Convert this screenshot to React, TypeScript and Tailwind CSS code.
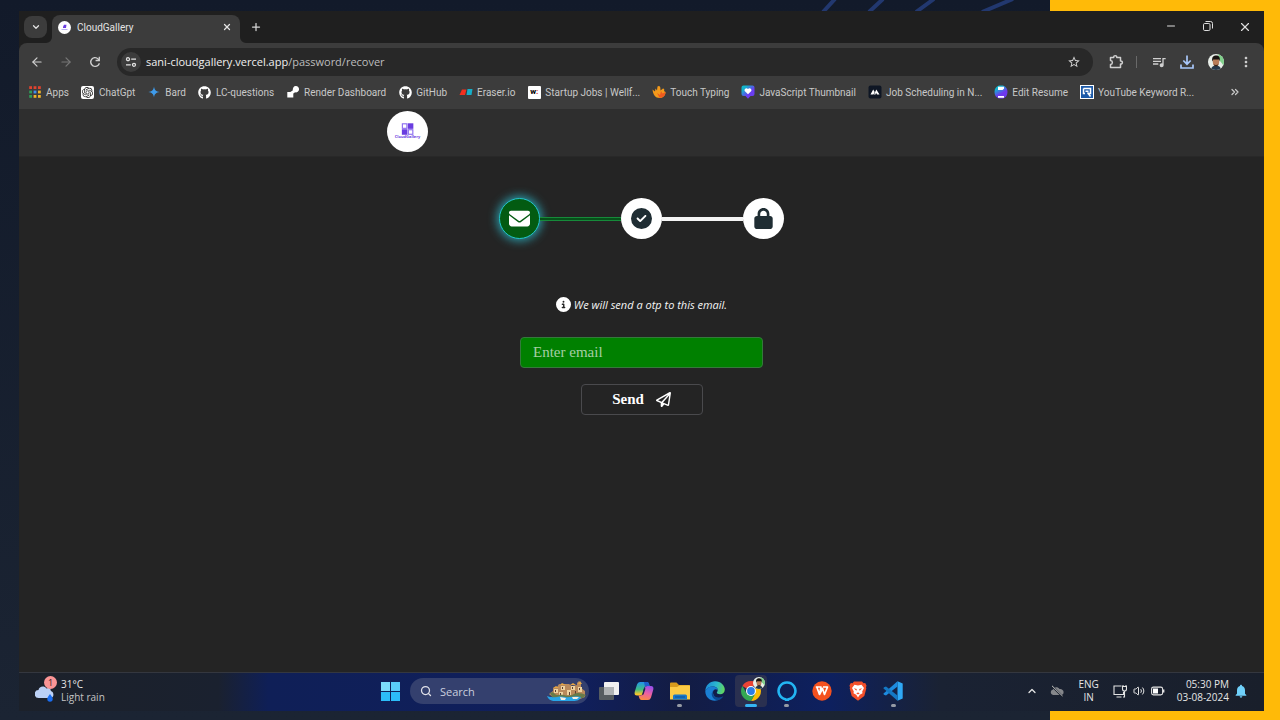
import type { ReactNode } from "react";
import {
  FaCircleCheck,
  FaCircleInfo,
  FaEnvelope,
  FaGithub,
  FaLock,
  FaRegPaperPlane,
} from "react-icons/fa6";
import { SiOpenai } from "react-icons/si";
import {
  MdMoreVert,
  MdNotifications,
  MdOutlineQueueMusic,
  MdStarBorder,
} from "react-icons/md";
import {
  ArrowLeft,
  ArrowRight,
  ChevronDown,
  ChevronsRight,
  ChevronUp,
  Minus,
  Plus,
  Search,
  Volume2,
  X,
} from "lucide-react";

function GalleryMark({ className }: { className: string }) {
  return (
    <svg viewBox="0 0 40 40" className={className} aria-hidden="true">
      <circle cx="20" cy="20" r="20" fill="#fff" />
      <rect x="15" y="12.5" width="4.4" height="4.4" fill="none" stroke="#8b6cf0" strokeWidth="1.1" />
      <rect x="20.3" y="12" width="5.4" height="5.4" fill="#6a3de0" />
      <rect x="14.5" y="17.8" width="5.4" height="5.4" fill="#6a3de0" />
      <rect x="20.8" y="18.3" width="4.4" height="4.4" fill="none" stroke="#8b6cf0" strokeWidth="1.1" />
    </svg>
  );
}

function AppsIcon() {
  const colors = ["#e0432f", "#e0432f", "#e0432f", "#2f9e58", "#3f8ef0", "#f0b429", "#2f9e58", "#f0b429", "#f0b429"];
  return (
    <svg viewBox="0 0 12 12" className="size-3">
      {colors.map((c, i) => (
        <rect key={i} x={(i % 3) * 4.4 + 0.2} y={Math.floor(i / 3) * 4.4 + 0.2} width="2.8" height="2.8" fill={c} />
      ))}
    </svg>
  );
}

const bookmarks: { label: string; icon: ReactNode }[] = [
  { label: "Apps", icon: <AppsIcon /> },
  {
    label: "ChatGpt",
    icon: (
      <span className="flex size-[13px] items-center justify-center rounded-xs bg-white">
        <SiOpenai className="size-[11px] text-[#222]" />
      </span>
    ),
  },
  {
    label: "Bard",
    icon: (
      <svg viewBox="0 0 14 14" className="size-3.5">
        <path d="M7 1.5C7.5 5 9 6.5 12.7 7 9 7.5 7.5 9 7 12.500 6.500 9 5 7.500 1.300 7 5 6.500 6.500 5 7 1.500Z" fill="#3f9bea" />
        <circle cx="7" cy="7" r="1.700" fill="#3f9bea" />
      </svg>
    ),
  },
  { label: "LC-questions", icon: <FaGithub className="size-[13px] text-white" /> },
  {
    label: "Render Dashboard",
    icon: (
      <svg viewBox="0 0 14 14" className="size-3.5">
        <path d="M9.700 1a3.200 3.200 0 1 1-.6 6.300L7.300 8.500V12.500H1.300V7h3l2.400-1.600C6.700 3 7.800 1 9.700 1Z" fill="#fff" />
      </svg>
    ),
  },
  { label: "GitHub", icon: <FaGithub className="size-[13px] text-white" /> },
  {
    label: "Eraser.io",
    icon: (
      <svg viewBox="0 0 14 14" className="size-3.5">
        <path d="M3 4.500h4.500L6 10H.5Z" fill="#f2301f" />
        <path d="M8.500 4h5l-1 6h-5Z" fill="#16aec8" />
      </svg>
    ),
  },
  {
    label: "Startup Jobs | Wellf...",
    icon: (
      <span className="flex size-[13px] items-center justify-center rounded-[1px] bg-white text-[8px] leading-none font-extrabold text-black">
        w<span className="text-[#d33]">:</span>
      </span>
    ),
  },
  {
    label: "Touch Typing",
    icon: (
      <svg viewBox="0 0 14 14" className="size-3.5">
        <path d="M.5 4.500 3 6.500 3.500 3.500 5 5.500 5.500 1.500Q7.500.3 8.300 2.500L8.500 5.500 11 3.500Q13 4 12 6L13.500 7C13.500 11 10.500 13 7.500 13 3.500 13 1 9.500.5 4.500Z" fill="#f39a1b" />
        <path d="m5 8 3 2 1-4 1.500 2.500L13.500 7C13.500 10.500 11 13 7.500 12.800Z" fill="#ee5a1f" />
      </svg>
    ),
  },
  {
    label: "JavaScript Thumbnail",
    icon: (
      <svg viewBox="0 0 14 14" className="size-3.5">
        <defs>
          <linearGradient id="js-shield" x1="0" y1="0" x2="1" y2="1">
            <stop offset=".2" stopColor="#12b5cb" />
            <stop offset=".6" stopColor="#6a3df0" />
          </linearGradient>
        </defs>
        <path d="M2.500.5h9A2 2 0 0 1 13.500 2.500v6.500a2 2 0 0 1-2 2H9.500L7 13.700 4.500 11h-2a2 2 0 0 1-2-2V2.500a2 2 0 0 1 2-2Z" fill="url(#js-shield)" />
        <path d="M7 9.300 3.700 6C2.700 4 5.500 2 7 4 8.500 2 11.300 4 10.300 6Z" fill="#fff" />
      </svg>
    ),
  },
  {
    label: "Job Scheduling in N...",
    icon: (
      <svg viewBox="0 0 14 14" className="size-3.5">
        <rect x=".5" y=".5" width="13" height="13" rx="2" fill="#0e1624" />
        <path d="M2.500 9.500 5.200 4.500 6.700 7 5.500 9.500ZM6 9.500 8.300 4.500 11.500 9.500H9L8 7.800 7.500 9.500Z" fill="#fff" />
      </svg>
    ),
  },
  {
    label: "Edit Resume",
    icon: (
      <svg viewBox="0 0 14 14" className="size-3.5">
        <defs>
          <linearGradient id="resume" x1="0" y1="0" x2=".6" y2="1">
            <stop offset=".25" stopColor="#10b9d0" />
            <stop offset=".7" stopColor="#6d38ee" />
          </linearGradient>
        </defs>
        <path d="M5 .5h4Q13.500 2 13.500 7T9 13.500H5Q.5 12 .5 7T5 .5Z" fill="url(#resume)" />
        <path d="M4 1.800h6V3.800L8.500 5H4ZM4 11h6v1.700H4Z" fill="#fff" />
      </svg>
    ),
  },
  {
    label: "YouTube Keyword R...",
    icon: (
      <svg viewBox="0 0 14 14" className="size-3.5">
        <rect x=".5" y=".5" width="13" height="13" fill="#1d5aa8" stroke="#fff" />
        <path d="M3.500 3.500h7v5H7.500M3.500 3.500v5H5M7.500 7.500 10.500 11.500M5.500 6.300h3" fill="none" stroke="#fff" strokeWidth="1.500" />
      </svg>
    ),
  },
];

function Avatar({ className }: { className: string }) {
  return (
    <svg viewBox="0 0 16 16" className={className} aria-hidden="true">
      <defs>
        <clipPath id="avatar-clip">
          <circle cx="8" cy="8" r="8" />
        </clipPath>
      </defs>
      <g clipPath="url(#avatar-clip)">
        <rect width="16" height="16" fill="#e9efe9" />
        <path d="M10 0h6v12l-4-5Z" fill="#7fd08a" />
        <path d="M3 16c0-3 2-4.500 5-4.500s5 1.500 5 4.500Z" fill="#26384a" />
        <ellipse cx="8" cy="7.800" rx="3.200" ry="4.200" fill="#b87c58" />
        <path d="M4.300 7.500C3.500 3 5.500 1.500 8.200 1.500S12.500 3.200 11.700 7.500L11 5.500H5.300Z" fill="#17120f" />
        <path d="M5.600 10.300c1 .8 3.800.8 4.800 0-.3 1.500-1.300 2-2.400 2s-2.100-.5-2.400-2Z" fill="#3a2419" />
      </g>
    </svg>
  );
}

function TitleBar() {
  return (
    <div className="flex h-8 items-center bg-[#1f1f1f] pl-[5px]">
      <button aria-label="Search tabs" className="flex h-[22px] w-[23px] items-center justify-center rounded-lg bg-[#3c3c3c] text-[#e3e3e3]">
        <ChevronDown className="size-2.5" strokeWidth={3} />
      </button>
      <div className="relative ml-[5px] flex h-7 w-[188px] items-center self-end rounded-t-lg bg-[#3c3c3c] pr-2 pb-1 pl-1.5">
        <svg viewBox="0 0 6 6" className="absolute bottom-0 -left-1.5 size-1.5" aria-hidden="true">
          <path d="M6 0v6H0a6 6 0 0 0 6-6Z" fill="#3c3c3c" />
        </svg>
        <svg viewBox="0 0 6 6" className="absolute -right-1.5 bottom-0 size-1.5" aria-hidden="true">
          <path d="M0 0v6h6a6 6 0 0 1-6-6Z" fill="#3c3c3c" />
        </svg>
        <svg viewBox="0 0 13 13" className="size-[13px]" aria-hidden="true">
          <circle cx="6.500" cy="6.500" r="6.500" fill="#fff" />
          <path d="M5 6 6 3.800h2.500L8 7H5Z" fill="#6a3de0" />
          <path d="M3.500 8.500h6" stroke="#b9b0f2" />
        </svg>
        <span className="ml-1.5 flex-1 font-['Roboto',sans-serif] text-[10px] text-[#e3e3e3]">CloudGallery</span>
        <button aria-label="Close tab" className="text-[#e3e3e3]">
          <X className="size-2.5" strokeWidth={3} />
        </button>
      </div>
      <button aria-label="New tab" className="ml-2.5 text-[#d5d5d5]">
        <Plus className="size-3" strokeWidth={2.5} />
      </button>
      <div className="mr-px ml-auto flex text-[#dedede]">
        <button aria-label="Minimize" className="flex w-[37px] justify-center">
          <Minus className="size-3" />
        </button>
        <button aria-label="Restore" className="flex w-[37px] justify-center">
          <svg viewBox="0 0 12 12" className="size-3" fill="none" stroke="currentColor" strokeWidth="1">
            <rect x="1.500" y="3.500" width="6.500" height="7" rx="1.200" />
            <path d="M3.500 1.500H8.500A2 2 0 0 1 10.500 3.500V8.500" />
          </svg>
        </button>
        <button aria-label="Close" className="flex w-[37px] justify-center">
          <X className="size-3.5" />
        </button>
      </div>
    </div>
  );
}

function Toolbar() {
  return (
    <div className="flex h-[38px] items-center rounded-t-lg bg-[#3c3c3c] pl-[11px] text-[#d0d0d0]">
      <button aria-label="Back">
        <ArrowLeft className="size-3.5" />
      </button>
      <button aria-label="Forward" className="ml-[15px] text-[#777]">
        <ArrowRight className="size-3.5" />
      </button>
      <button aria-label="Reload" className="ml-[15px]">
        <svg viewBox="0 0 24 24" className="size-3.5" fill="currentColor">
          <path d="M12 20.500a8.500 8.500 0 1 1 6.300-14.200V3h2.200v7.500H13V8.300h4.300A6.300 6.300 0 1 0 18.200 14h2.300A8.500 8.500 0 0 1 12 20.500Z" />
        </svg>
      </button>
      <div className="ml-[15px] flex h-7 flex-1 items-center rounded-full bg-[#282828] pr-3 pl-1">
        <button aria-label="View site information" className="flex size-5 items-center justify-center rounded-full bg-[#3c3c3c]">
          <svg viewBox="0 0 12 12" className="size-3" fill="none" stroke="#e3e3e3" strokeWidth="1.300">
            <circle cx="3" cy="3.200" r="1.500" />
            <path d="M6.200 3.200H11M1 8.800h4.800" />
            <circle cx="9" cy="8.800" r="1.500" />
          </svg>
        </button>
        <div className="ml-[5px] flex-1 text-[11px] text-[#f0f0f0]">
          sani-cloudgallery.vercel.app<span className="text-[#bdbdbd]">/password/recover</span>
        </div>
        <button aria-label="Bookmark this tab">
          <MdStarBorder className="size-3.5" />
        </button>
      </div>
      <button aria-label="Extensions" className="ml-[15px]">
        <svg viewBox="0 0 16 16" className="size-4" fill="none" stroke="currentColor" strokeWidth="1.500">
          <path d="M2.500 3.500H5.700C5.500 1 9 1 8.800 3.500H12.500V7C15 6.800 15 10.200 12.500 10V13.500H2.500V10.500C5 10.300 5 6.700 2.500 6.500Z" strokeLinejoin="round" />
        </svg>
      </button>
      <span className="ml-3 h-3 w-px bg-[#696969]" />
      <button aria-label="Media controls" className="ml-3.5">
        <MdOutlineQueueMusic className="size-4" />
      </button>
      <button aria-label="Downloads" className="ml-3 text-[#a8c7fa]">
        <svg viewBox="0 0 16 16" className="size-4" fill="none" stroke="currentColor" strokeWidth="1.700">
          <path d="M8 1.500v8M4.300 6.500 8 10.200 11.700 6.500M2 10.500V14H14V10.500" />
        </svg>
      </button>
      <button aria-label="Profile" className="ml-[13px]">
        <Avatar className="size-4" />
      </button>
      <button aria-label="Menu" className="mr-2.5 ml-3.5">
        <MdMoreVert className="size-4" />
      </button>
    </div>
  );
}

function Bookmarks() {
  return (
    <nav aria-label="Bookmarks" className="flex h-7 items-center gap-3 bg-[#3c3c3c] pb-1.5 pl-[9px] font-['Roboto',sans-serif] text-[10px] text-[#c8c8c8]">
      {bookmarks.map((b) => (
        <a key={b.label} href="#" className="flex items-center gap-1 whitespace-nowrap">
          <span className="flex w-3.5 justify-center">{b.icon}</span>
          {b.label}
        </a>
      ))}
      <button aria-label="More bookmarks" className="mr-[23px] ml-auto">
        <ChevronsRight className="size-3" strokeWidth={2.5} />
      </button>
    </nav>
  );
}

function Page() {
  return (
    <>
      <header className="h-12 border-b border-[#282828] bg-[#2e2e2e] pt-0.5">
        <div className="mx-auto w-[509px]">
          <a href="#" aria-label="CloudGallery home" className="relative block size-[41px]">
            <GalleryMark className="size-full" />
            <span className="absolute inset-x-0 top-6 text-center text-[4px] leading-[4px] font-bold text-[#6a3de0]">CloudGallery</span>
          </a>
        </div>
      </header>
      <main className="flex flex-1 flex-col items-center bg-[#242424] pt-[41px]">
        <div className="flex w-[285px] items-center">
          <span className="flex size-[41px] items-center justify-center rounded-full border border-[#22c5cc] bg-[#035b12] text-white shadow-[0_0_10px_2px_#2b9aa8]">
            <FaEnvelope className="size-[21px]" />
          </span>
          <span className="h-1 flex-1 border-y border-[#168a3a] bg-[#07501a]" />
          <span className="flex size-[41px] items-center justify-center rounded-full bg-white text-[#1f2d33]">
            <FaCircleCheck className="size-[21px]" />
          </span>
          <span className="h-1 flex-1 bg-[#f4f4f4]" />
          <span className="flex size-[41px] items-center justify-center rounded-full bg-white text-[#1f2d33]">
            <FaLock className="size-[21px]" />
          </span>
        </div>
        <form className="mt-14 flex flex-col items-center" onSubmit={(e) => e.preventDefault()}>
          <label htmlFor="email" className="flex h-5 items-center gap-[3px] text-[11px] text-[#f4f4f4] italic">
            <FaCircleInfo className="mb-0.5 size-[15px] text-white" />
            We will send a otp to this email.
          </label>
          <input
            id="email"
            type="email"
            placeholder="Enter email"
            className="mt-[22px] h-[31px] w-[243px] rounded-sm border border-[#35793c] bg-[#008000] px-3 font-['Liberation_Serif',serif] text-[15px] text-white placeholder:text-[#a5cfa5] focus:outline-none"
          />
          <button
            type="submit"
            className="mt-4 flex h-[31px] w-[122px] items-center justify-center gap-3 rounded-sm border border-[#4a4a4d] font-['Liberation_Serif',serif] text-[15px] font-bold text-white"
          >
            Send
            <FaRegPaperPlane className="size-[15px]" />
          </button>
        </form>
      </main>
    </>
  );
}

function HarbourArt() {
  return (
    <svg viewBox="0 0 40 20" className="h-5 w-10" aria-hidden="true">
      <path d="M2 13 6 10V7l4-1 2-3 4 1 2-1h4l3 2 5-1V2l2-2 2 3v4l4 3v6l-5 2H8Z" fill="#b98a5c" />
      <path d="m6 7 3-2 3 2ZM13 4l2-2 4 2ZM23 4l3-2 3 2ZM31 3l2-3 2 3Z" fill="#e6a544" />
      <path d="M7 8h4v4H7ZM14 5h4v4h-4ZM24 5h4v4h-4ZM20 9h4v5h-4ZM31 6h4v5h-4ZM12 11h4v4h-4Z" fill="#eed3a0" />
      <path d="M8 9h1v2H8ZM15 6h1v2h-1ZM25 6h1v2h-1ZM22 11h1v3h-1ZM32 7h1v2h-1ZM13 12h1v2h-1ZM28 10h1v3h-1Z" fill="#5d3f35" />
      <path d="M3 12c2-1 3-1 5 1s6 0 9 1 7 1 10-1 8-1 12 1l-3 3H6Z" fill="#687b4a" />
      <path d="M0 15c7 3 12-1 18 1 7 1 9-2 16 0-1 3-4 4-8 4H8c-4 0-7-2-8-5Z" fill="#27a5e8" />
      <path d="m13 16 6 1-1 2h-4ZM25 16h7l-2 2h-4Z" fill="#f3eee2" />
    </svg>
  );
}

const taskbarApps: { label: string; icon: ReactNode; state?: "open" | "active" }[] = [
  {
    label: "Task view",
    icon: (
      <svg viewBox="0 0 22 20" className="h-5 w-[22px]">
        <rect x="6" y="1" width="15" height="13" rx="1" fill="#f1f1f1" />
        <rect x="1" y="6" width="15" height="13" rx="1" fill="#565c60" />
        <path d="M6 6h10v8H6Z" fill="#b0b3b5" />
      </svg>
    ),
  },
  {
    label: "Copilot",
    icon: (
      <svg viewBox="0 0 20 20" className="size-5">
        <defs>
          <linearGradient id="cp-left" x1="0" y1="0" x2="0" y2="1">
            <stop offset="0" stopColor="#2294ea" />
            <stop offset=".55" stopColor="#3fbd83" />
            <stop offset=".9" stopColor="#f6c52c" />
          </linearGradient>
          <linearGradient id="cp-right" x1=".6" y1="0" x2=".3" y2="1">
            <stop offset="0" stopColor="#9b4fe8" />
            <stop offset=".5" stopColor="#ec60a3" />
            <stop offset="1" stopColor="#fb8a3e" />
          </linearGradient>
        </defs>
        <path d="M6 1h7q1.500 0 2 2l.6 2h-3q-2 0-2.500 2L8.500 12.500Q8 14.500 6 14.500H3Q0 14.500.7 11L3 3.500Q3.800 1 6 1Z" fill="url(#cp-left)" />
        <path d="M10 1h3q1.500 0 2 2l.6 2h-3L11 6Z" fill="#1c5fce" />
        <path d="M14 19H7.500q-1.700 0-2.200-2l-.8-2.500H6.500q2 0 2.600-2L10.700 7Q11.300 5 13.500 5H17q3 0 2.300 3.500L17 16.500Q16.200 19 14 19Z" fill="url(#cp-right)" />
        <path d="M11.500 7.500 9.800 12.800Q9.500 14 8.200 14.200L10 7Z" fill="#1b2450" />
      </svg>
    ),
  },
  {
    label: "File Explorer",
    state: "open",
    icon: (
      <svg viewBox="0 0 20 20" className="size-5">
        <path d="M0 2.500Q0 1.500 1 1.500H6.500L9 4H19Q20 4 20 5V9H0Z" fill="#d79b1c" />
        <path d="M0 6H7L9.500 4.500H20V18.500H0Z" fill="#fccb45" />
        <path d="M3 18.500V15Q3 13.500 4.500 13.500h11Q17 13.500 17 15v3.500Z" fill="#1a78c8" />
        <path d="M5 15.500h10v1H5Z" fill="#0c4f94" />
      </svg>
    ),
  },
  {
    label: "Edge",
    icon: (
      <svg viewBox="0 0 20 20" className="size-5">
        <defs>
          <linearGradient id="edge-top" x1="0" y1=".3" x2="1" y2=".5">
            <stop offset="0" stopColor="#1b8ad8" />
            <stop offset=".55" stopColor="#2bb8cf" />
            <stop offset="1" stopColor="#62d65e" />
          </linearGradient>
        </defs>
        <path d="M.3 10C.5 4 5 .2 10 .2c6 0 9.800 4.500 9.800 8.300 0 3-2 4.800-4.700 4.800-2 0-3.300-.8-3.300-1.700 0-.7.900-1 .9-2.700C12.700 7 10.800 5.500 8 5.500 4.500 5.500 1.500 7.500.3 10Z" fill="url(#edge-top)" />
        <path d="M.3 10C1.500 7.500 4 5.500 7.500 5.500c3 0 5 1.500 5.200 3.400C10 7.500 8 9 8 11.500c0 3 2.500 6 6.500 6.300-.8.800-1.500 1.200-2 1.500C6 21 .2 16.500.3 10Z" fill="#1a7fd4" />
        <path d="M8 9.500C6.500 13 10 16.800 14 16.500c2 0 3.500-.8 4.300-1.200-1 2-3.500 4-5.800 4C7.500 18.500 5 13 8 9.500Z" fill="#0c4a92" />
      </svg>
    ),
  },
  {
    label: "Chrome",
    state: "active",
    icon: (
      <span className="relative">
        <svg viewBox="0 0 20 20" className="size-5">
          <path d="M10 10 1.340 5A10 10 0 0 1 18.660 5H10Z" fill="#ea4335" />
          <path d="M10 10 18.660 5A10 10 0 0 1 10 20L14.300 12.500Z" fill="#fbbc05" />
          <path d="M10 10 14.300 12.500 10 20A10 10 0 0 1 1.340 5L5.700 12.500Z" fill="#34a853" />
          <circle cx="10" cy="10" r="5" fill="#fff" />
          <circle cx="10" cy="10" r="3.900" fill="#2b7de9" />
        </svg>
        <Avatar className="absolute -top-1 -right-1 size-3" />
      </span>
    ),
  },
  {
    label: "Alexa",
    state: "open",
    icon: (
      <svg viewBox="0 0 20 20" className="size-5">
        <path d="M8.500 18.200A8.400 8.400 0 1 1 11.500 18.200L10 19.500Z" fill="none" stroke="#23b5f3" strokeWidth="2.600" strokeLinejoin="round" />
        <path d="M8.500 17.200C10 19 11 17.500 12 16.800V20H8Z" fill="#23b5f3" />
      </svg>
    ),
  },
  {
    label: "WPS Office",
    icon: (
      <svg viewBox="0 0 20 20" className="size-5">
        <circle cx="10" cy="10" r="9.700" fill="#f4511f" />
        <path d="M3.800 6H9L7.500 13.500 4.800 6M7.500 13.500 10.500 7.500 12.500 13.500 15.500 6H11" fill="none" stroke="#fff" strokeWidth="1.700" strokeLinejoin="round" />
      </svg>
    ),
  },
  {
    label: "Brave",
    icon: (
      <svg viewBox="0 0 20 20" className="size-5">
        <path d="M6 .5h8l1.500 1.700 1.700-.2 1.300 2.500-.5 2 .3 1-2 7.500L10 19.700 3.700 15l-2-7.500.3-1-.5-2L2.800 2l1.700.2Z" fill="#f4502a" />
        <path d="M6.500 3.800 10 4.500 13.500 3.800 16 7l-1.800 3.500.3 1.800-2.700 1.500L10 16.500 8.200 13.800 5.500 12.300l.3-1.800L4 7Z" fill="#fff" />
        <path d="m5.800 7.200 3 .8-.4 1.800ZM14.200 7.200l-3 .8.4 1.800ZM8.300 12.200 10 11.500l1.700.7L10 13.500Z" fill="#f4502a" />
      </svg>
    ),
  },
  {
    label: "Visual Studio Code",
    state: "open",
    icon: (
      <svg viewBox="0 0 20 20" className="size-5">
        <path d="M14.500.3 19.700 2.500V17.500L14.500 19.700Z" fill="#2fa8f5" />
        <path d="M14.500.3V5.500L3 14.500 1 13.800.3 12.800Z" fill="#1d8be0" />
        <path d="M14.500 19.700V14.500L3 5.500 1 6.200.3 7.200Z" fill="#1478c4" />
      </svg>
    ),
  },
];

function Indicator({ state }: { state?: "open" | "active" }) {
  if (state === "active") return <span className="absolute bottom-0 h-[3px] w-3 rounded-full bg-[#35b4f4]" />;
  if (state === "open") return <span className="absolute bottom-0 h-[3px] w-[5px] rounded-full bg-[#969ba5]" />;
  return null;
}

function Taskbar() {
  return (
    <footer className="grid h-[39px] grid-cols-[1fr_auto_1fr] items-center border-t border-[#34373f] bg-[linear-gradient(to_right,#1c212a_0%,#1a212f_16%,#0f1f57_20%,#101f5c_45%,#131c43_53%,#0d205f_65%,#1a2233_74%,#191f2b_100%)] pb-0.5 text-[10px] leading-[13px] text-[#e6e6e6]">
      <button className="flex items-center gap-1.5 pl-4 text-left">
        <span className="relative">
          <svg viewBox="0 0 20 22" className="h-[22px] w-5" aria-hidden="true">
            <path d="M4 18A4 4 0 0 1 3.500 10C4 6.500 9 5 11.500 8.500 14 7 16 9 15.800 11c3.400.5 3.700 7-.3 7Z" fill="#bcd1f6" />
            <path d="M15 14c2 2.500 2.700 3.700 2.700 5a2.700 2.700 0 0 1-5.400 0c0-1.300.700-2.500 2.700-5Z" fill="#1a6df0" />
          </svg>
          <span className="absolute -top-1 -right-0.5 flex size-[13px] items-center justify-center rounded-full bg-[#fb9596] text-[9px] leading-none text-[#3a1517]">1</span>
        </span>
        <span>
          <span className="block">31°C</span>
          <span className="block text-[#c4c4c4]">Light rain</span>
        </span>
      </button>
      <div className="flex items-center gap-0.5">
        <button aria-label="Start" className="flex w-9 justify-center">
          <svg viewBox="0 0 19 19" className="size-[19px]">
            <path d="M0 0h9v9H0Z" fill="#7cdcfb" />
            <path d="M10 0h9v9h-9Z" fill="#5accfa" />
            <path d="M0 10h9v9H0ZM10 10h9v9h-9Z" fill="#2cbcf8" />
          </svg>
        </button>
        <label className="flex h-[26px] w-[179px] items-center rounded-full bg-[#34406e] pr-0.5 pl-2.5">
          <Search className="size-3 text-[#e2e2ea]" strokeWidth={2.5} />
          <input type="search" aria-label="Search" placeholder="Search" className="ml-2 w-0 flex-1 bg-transparent text-[11px] placeholder:text-[#c9cede] focus:outline-none" />
          <HarbourArt />
        </label>
        <div className="grid w-80 grid-cols-9 justify-items-center">
          {taskbarApps.map((app) => (
            <button
              key={app.label}
              aria-label={app.label}
              className={
                app.state === "active"
                  ? "relative flex size-8 items-center justify-center rounded-sm bg-[#2a3050]"
                  : "relative flex size-8 items-center justify-center rounded-sm"
              }
            >
              {app.icon}
              <Indicator state={app.state} />
            </button>
          ))}
        </div>
      </div>
      <div className="flex items-center justify-end pr-[15px]">
        <button aria-label="Show hidden icons">
          <ChevronUp className="size-3" strokeWidth={2.5} />
        </button>
        <svg viewBox="0 0 14 12" className="ml-3 h-3 w-3.5" aria-label="Offline">
          <path d="M3 10A2.800 2.800 0 0 1 3 4.500C4 1.500 8 1.500 9.500 4c3 0 4.500 2 4 4-.3 1.500-1.500 2-2.500 2Z" fill="#85878b" />
          <path d="M2 1 12.500 11.500" stroke="#1a202c" strokeWidth="2" />
          <path d="M2 .8 12.500 11" stroke="#c9c9c9" />
        </svg>
        <button className="ml-3.5 text-center">
          ENG
          <br />
          IN
        </button>
        <button aria-label="Network, volume and battery" className="ml-3.5 flex items-center gap-1.5">
          <svg viewBox="0 0 14 14" className="size-3.5" fill="none" stroke="#e3e3e3" strokeWidth="1.100">
            <path d="M8.500 2H1V10.500H10.500V8M3.500 13H8.500M10 1v1.500M13 1v1.500M9.500 2.500h4V5a2 2 0 0 1-4 0ZM11.500 7V13H10" />
          </svg>
          <Volume2 className="size-3" />
          <svg viewBox="0 0 14 10" className="h-2.5 w-3.5">
            <rect x=".6" y="1.100" width="11" height="7.800" rx="1.800" fill="none" stroke="#e3e3e3" strokeWidth="1.100" />
            <rect x="2" y="2.500" width="5" height="5" fill="#fff" />
            <path d="M12.700 3.500v3" stroke="#e3e3e3" strokeWidth="1.400" />
          </svg>
        </button>
        <button className="ml-3 text-right">
          05:30 PM
          <br />
          03-08-2024
        </button>
        <MdNotifications className="ml-1 size-4 text-[#6fd0fa]" aria-label="Notifications" />
      </div>
    </footer>
  );
}

export default function App() {
  return (
    <div className="relative flex min-h-screen flex-col bg-[linear-gradient(to_left,#ffba08_230px,transparent_230px),linear-gradient(to_bottom,#121a2a,#1b2433)] pt-[11px] pr-4 pb-[9px] pl-[19px] font-['Open_Sans','Noto_Sans',sans-serif]">
      <svg viewBox="0 0 210 11" className="absolute top-0 right-[250px] h-[11px] w-[210px]" fill="none" stroke="#22386f" strokeWidth="4" aria-hidden="true">
        <path d="M3 12 15 -1M49 12 63 -1M96 12 114 -1M162 12 193 -1" />
      </svg>
      <div className="relative flex flex-1 flex-col">
        <TitleBar />
        <div className="bg-[#1f1f1f]">
          <Toolbar />
        </div>
        <Bookmarks />
        <Page />
        <Taskbar />
      </div>
    </div>
  );
}
